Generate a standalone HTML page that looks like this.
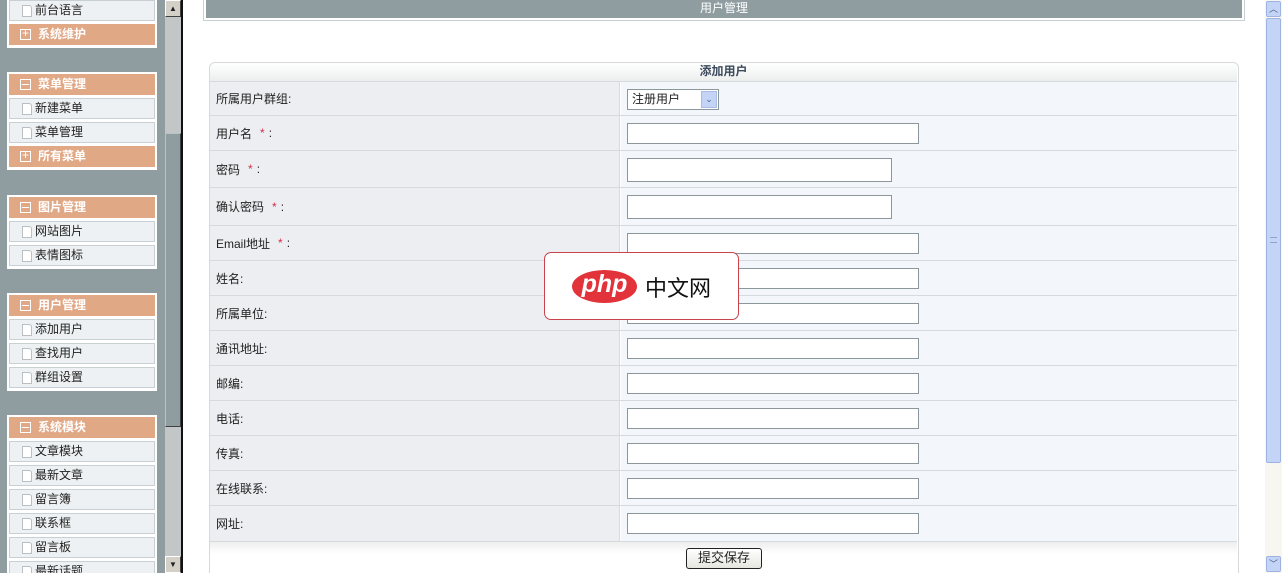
<!DOCTYPE html>
<html><head><meta charset="utf-8"><style>
*{margin:0;padding:0;box-sizing:border-box}
html,body{width:1284px;height:573px;overflow:hidden}
body{position:relative;background:#fff;font-family:"Liberation Sans","Noto Sans CJK SC",sans-serif;font-size:12px;color:#222}
.a{position:absolute}
.side{left:0;top:0;width:165px;height:573px;background:#8f9da1}
.box{position:absolute;left:7px;width:150px;background:#fff}
.it{position:absolute;left:9px;width:146px;height:21px;background:#eef1f3;border:1px solid #c9d0d4;line-height:19px;padding-left:25px;color:#222;font-size:12px}
.it:before{content:"";position:absolute;left:12px;top:4px;width:8px;height:10px;border:1px solid #b9bfc2;border-top-right-radius:3px;background:#fff}
.hd{position:absolute;left:9px;width:146px;height:21px;background:#e1a886;color:#fff;font-weight:bold;line-height:21px;padding-left:29px;font-size:12px}
.hd:before{content:"";position:absolute;left:11px;top:5px;width:9px;height:9px;border:1px solid #fff}
.hd.m:after{content:"";position:absolute;left:13px;top:10px;width:7px;height:1px;background:#fff}
.hd.p:after{content:"+";position:absolute;left:11px;top:-1px;width:11px;text-align:center;font-weight:normal;font-size:12px}
.row{position:absolute;left:210px;width:1027px;border-bottom:1px solid #d4dade}
.lab{position:absolute;left:0;top:0;bottom:0;width:410px;background:#eceef1;padding-left:6px;display:flex;align-items:center;border-right:1px solid #d4dade}
.val{position:absolute;left:411px;right:0;top:0;bottom:0;background:#f3f7fb}
.in{position:absolute;left:6px;width:292px;height:21px;background:#fff;border:1px solid #8c979c}
.st{color:#d0304a;margin:0 4px 0 8px}
</style></head><body>
<div class="a side"></div>
<div class="box" style="top:-2px;height:50px"></div>
<div class="it" style="top:0">前台语言</div>
<div class="hd p" style="top:24px">系统维护</div>
<div class="box" style="top:72px;height:98px"></div>
<div class="hd m" style="top:74px">菜单管理</div>
<div class="it" style="top:98px">新建菜单</div>
<div class="it" style="top:122px">菜单管理</div>
<div class="hd p" style="top:146px">所有菜单</div>
<div class="box" style="top:195px;height:74px"></div>
<div class="hd m" style="top:197px">图片管理</div>
<div class="it" style="top:221px">网站图片</div>
<div class="it" style="top:245px">表情图标</div>
<div class="box" style="top:293px;height:98px"></div>
<div class="hd m" style="top:295px">用户管理</div>
<div class="it" style="top:319px">添加用户</div>
<div class="it" style="top:343px">查找用户</div>
<div class="it" style="top:367px">群组设置</div>
<div class="box" style="top:415px;height:158px"></div>
<div class="hd m" style="top:417px">系统模块</div>
<div class="it" style="top:441px">文章模块</div>
<div class="it" style="top:465px">最新文章</div>
<div class="it" style="top:489px">留言簿</div>
<div class="it" style="top:513px">联系框</div>
<div class="it" style="top:537px">留言板</div>
<div class="it" style="top:561px;height:12px;border-bottom:none">最新话题</div>
<div class="a" style="left:165px;top:0;width:18px;height:573px;background:#c2c6c6;border-right:2px solid #111"></div>
<div class="a" style="left:165px;top:0;width:16px;height:17px;background:#d4d0c8;border:1px solid #fff;border-right-color:#404040;border-bottom-color:#404040;font-size:8px;text-align:center;line-height:15px">▲</div>
<div class="a" style="left:165px;top:133px;width:16px;height:294px;background:#8f9da1;border:1px solid #b8c2c4;border-right-color:#404040;border-bottom-color:#404040"></div>
<div class="a" style="left:165px;top:556px;width:16px;height:17px;background:#d4d0c8;border:1px solid #fff;border-right-color:#404040;font-size:8px;text-align:center;line-height:15px">▼</div>
<div class="a" style="left:203px;top:-2px;width:1042px;height:23px;border:1px solid #c9d0d4;background:#fff"></div>
<div class="a" style="left:206px;top:0;width:1036px;height:18px;background:#8f9da1;color:#fff;text-align:center;line-height:16px;font-size:12px">用户管理</div>
<div class="a" style="left:209px;top:62px;width:1030px;height:511px;border:1px solid #d6dadc;border-bottom:none;border-radius:6px 6px 0 0;background:#fff"></div>
<div class="a" style="left:210px;top:63px;width:1027px;height:19px;background:linear-gradient(#fff,#eceeee);border-bottom:1px solid #d4dade;border-radius:6px 6px 0 0;text-align:center;font-weight:bold;color:#3c4a5c;line-height:16px;font-size:12px">添加用户</div>

<div class="row" style="top:82px;height:34px"><div class="lab">所属用户群组:</div><div class="val"><div class="a" style="left:6px;top:7px;width:92px;height:21px;background:#fff;border:1px solid #8c979c;padding-left:4px;line-height:18px;font-size:12px">注册用户<div class="a" style="right:1px;top:1px;width:16px;height:17px;background:#c4d4f7;border:1px solid #aabbe4;color:#4d6185;font-size:9px;text-align:center;line-height:15px">⌄</div></div></div></div>
<div class="row" style="top:116px;height:35px"><div class="lab">用户名<span class="st">*</span>:</div><div class="val"><div class="in" style="top:7px"></div></div></div>
<div class="row" style="top:151px;height:37px"><div class="lab">密码<span class="st">*</span>:</div><div class="val"><div class="in" style="top:7px;width:265px;height:24px"></div></div></div>
<div class="row" style="top:188px;height:38px"><div class="lab">确认密码<span class="st">*</span>:</div><div class="val"><div class="in" style="top:7px;width:265px;height:24px"></div></div></div>
<div class="row" style="top:226px;height:35px"><div class="lab">Email地址<span class="st">*</span>:</div><div class="val"><div class="in" style="top:7px"></div></div></div>
<div class="row" style="top:261px;height:35px"><div class="lab">姓名:</div><div class="val"><div class="in" style="top:7px"></div></div></div>
<div class="row" style="top:296px;height:35px"><div class="lab">所属单位:</div><div class="val"><div class="in" style="top:7px"></div></div></div>
<div class="row" style="top:331px;height:35px"><div class="lab">通讯地址:</div><div class="val"><div class="in" style="top:7px"></div></div></div>
<div class="row" style="top:366px;height:35px"><div class="lab">邮编:</div><div class="val"><div class="in" style="top:7px"></div></div></div>
<div class="row" style="top:401px;height:35px"><div class="lab">电话:</div><div class="val"><div class="in" style="top:7px"></div></div></div>
<div class="row" style="top:436px;height:35px"><div class="lab">传真:</div><div class="val"><div class="in" style="top:7px"></div></div></div>
<div class="row" style="top:471px;height:35px"><div class="lab">在线联系:</div><div class="val"><div class="in" style="top:7px"></div></div></div>
<div class="row" style="top:506px;height:36px"><div class="lab">网址:</div><div class="val"><div class="in" style="top:7px"></div></div></div>
<div class="a" style="left:210px;top:542px;width:1027px;height:31px;background:linear-gradient(#eeeeee,#fff 12px)"></div>
<div class="a" style="left:686px;top:548px;width:76px;height:21px;border:1px solid #222;border-radius:3px;background:linear-gradient(#fff,#e6e6e0);text-align:center;line-height:18px;font-size:13px">提交保存</div>
<div class="a" style="left:1265px;top:0;width:17px;height:573px;background:#f7f6f0"></div>
<div class="a" style="left:1266px;top:1px;width:15px;height:16px;background:#c4d4f7;border:1px solid #9fb3e3;border-radius:2px;color:#4d6185;font-size:9px;text-align:center;line-height:14px">︿</div>
<div class="a" style="left:1266px;top:18px;width:15px;height:445px;background:#c4d4f7;border:1px solid #9fb3e3;border-radius:2px"></div>
<div class="a" style="left:1270px;top:237px;width:7px;height:6px;border-top:1px solid #8ea3d0;border-bottom:1px solid #8ea3d0"></div>
<div class="a" style="left:1266px;top:556px;width:15px;height:16px;background:#c4d4f7;border:1px solid #9fb3e3;border-radius:2px;color:#4d6185;font-size:9px;text-align:center;line-height:14px">﹀</div>
<div class="a" style="left:544px;top:252px;width:195px;height:68px;background:#fff;border:1px solid #c9434b;border-radius:7px"></div>
<div class="a" style="left:572px;top:270px;width:65px;height:33px;background:#e2333a;border-radius:50%;color:#fff;font-style:italic;font-weight:bold;font-size:25px;text-align:center;line-height:29px">php</div>
<div class="a" style="left:645px;top:273px;font-size:22px;color:#111;line-height:28px;font-family:'Noto Sans CJK SC',sans-serif">中文网</div>
</body></html>
